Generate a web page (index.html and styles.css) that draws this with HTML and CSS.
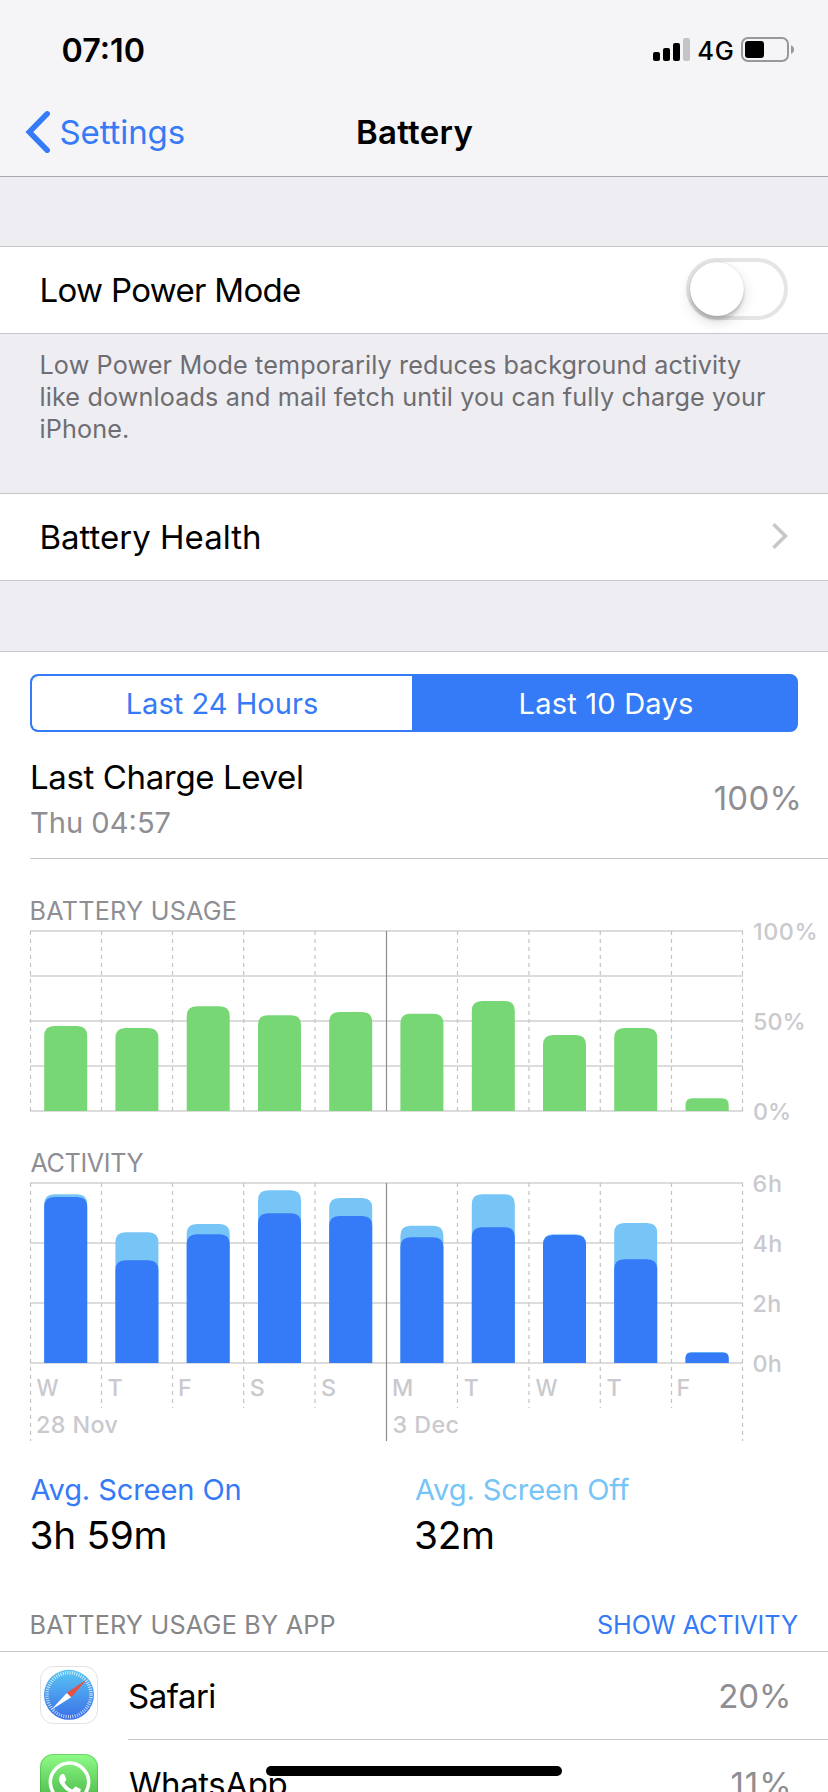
FILE: index.html
```
<!DOCTYPE html>
<html lang="en">
<head>
<meta charset="utf-8">
<title>Battery</title>
<link rel="stylesheet" href="styles.css">
</head>
<body>
<div class="screen">
  <header class="top">
    <div class="status">
      <span class="clock">07:10</span>
      <div class="indicators">
        <svg class="signal" width="37" height="23" viewBox="0 0 37 23">
          <rect x="0" y="14" width="7" height="9" rx="2"/>
          <rect x="10" y="10" width="7" height="13" rx="2"/>
          <rect x="20" y="5" width="7" height="18" rx="2"/>
          <rect x="30" y="0" width="7" height="23" rx="2" fill="#c4c4c6"/>
        </svg>
        <span class="network">4G</span>
        <svg class="cell" width="53" height="25" viewBox="0 0 53 25">
          <rect x="1" y="1" width="46" height="23" rx="6" fill="none" stroke="#98989a" stroke-width="2"/>
          <rect x="4" y="4" width="19" height="17" rx="3"/>
          <path d="M50 8.2c1.8.6 3 2.2 3 4.3s-1.200 3.700-3 4.300z" fill="#98989a"/>
        </svg>
      </div>
    </div>
    <nav class="nav">
      <a class="back">
        <svg width="26" height="44" viewBox="0 0 26 44"><path d="M22.200 3.800 4.300 22l17.900 18.200" fill="none" stroke="#357af6" stroke-width="5.500" stroke-linecap="round"/></svg>
        <span>Settings</span>
      </a>
      <h1 class="title">Battery</h1>
    </nav>
  </header>

  <section class="row">
    <span class="label power">Low Power Mode</span>
    <span class="toggle"><span class="knob"></span></span>
  </section>
  <p class="note"><span>Low Power Mode temporarily reduces background activity</span><br>like downloads and mail fetch until you can fully charge your<br>iPhone.</p>
  <section class="row">
    <span class="label">Battery Health</span>
    <svg class="chevron" width="18" height="28" viewBox="0 0 18 28"><path d="M2.500 2.200 14.400 14 2.500 25.800" fill="none" stroke="#c7c7cc" stroke-width="3.600"/></svg>
  </section>

  <main class="panel">
    <div class="segments">
      <span class="segment hours">Last 24 Hours</span>
      <span class="segment days selected">Last 10 Days</span>
    </div>
    <div class="charge">
      <div>
        <div class="charge-title">Last Charge Level</div>
        <div class="charge-time">Thu 04:57</div>
      </div>
      <span class="charge-value">100%</span>
    </div>

    <h2 class="heading usage">BATTERY USAGE</h2>
    <svg class="chart" width="828" height="222" viewBox="0 926 828 222">
      <path class="grid" d="M30 931H743M30 976H743M30 1021H743M30 1066H743M30 1111H743"/>
      <path class="dash" d="M30.500 931V1111M101.500 931V1111M172.500 931V1111M243.700 931V1111M315 931V1111M457.500 931V1111M529 931V1111M600.300 931V1111M671.500 931V1111M742.500 931V1111"/>
      <path class="week" d="M386.500 931V1111"/>
      <g class="green">
        <path d="M44.200 1111v-75q0-10 10-10h23q10 0 10 10v75z"/>
        <path d="M115.400 1111v-73q0-10 10-10h23q10 0 10 10v73z"/>
        <path d="M186.700 1111v-94.700q0-10 10-10h23q10 0 10 10v94.700z"/>
        <path d="M258 1111v-85.700q0-10 10-10h23q10 0 10 10v85.700z"/>
        <path d="M329.200 1111v-89q0-10 10-10h23q10 0 10 10v89z"/>
        <path d="M400.400 1111v-87.300q0-10 10-10h23q10 0 10 10v87.300z"/>
        <path d="M471.800 1111v-100q0-10 10-10h23q10 0 10 10v100z"/>
        <path d="M543 1111v-66q0-10 10-10h23q10 0 10 10v66z"/>
        <path d="M614.200 1111v-73q0-10 10-10h23q10 0 10 10v73z"/>
        <path d="M685.500 1111v-6q0-6.800 6.800-6.800h29.600q6.800 0 6.800 6.800v6z"/>
      </g>
      <g class="axis">
        <text x="753" y="940" letter-spacing=".55">100%</text>
        <text x="753" y="1030">50%</text>
        <text x="753" y="1120">0%</text>
      </g>
    </svg>

    <h2 class="heading activity">ACTIVITY</h2>
    <svg class="chart" width="828" height="272" viewBox="0 1178 828 272">
      <path class="grid" d="M30 1183H743M30 1243H743M30 1303H743M30 1363H743"/>
      <path class="dash" d="M30.500 1183V1441M101.500 1183V1408M172.500 1183V1408M243.700 1183V1408M315 1183V1408M457.500 1183V1408M529 1183V1408M600.300 1183V1408M671.500 1183V1408M742.500 1183V1441"/>
      <path class="week" d="M386.500 1183V1441"/>
      <g class="light">
        <path d="M44.200 1363v-158.700q0-10 10-10h23q10 0 10 10v158.700z"/>
        <path d="M115.400 1363v-120.700q0-10 10-10h23q10 0 10 10v120.700z"/>
        <path d="M186.700 1363v-129q0-10 10-10h23q10 0 10 10v129z"/>
        <path d="M258 1363v-162.800q0-10 10-10h23q10 0 10 10v162.800z"/>
        <path d="M329.200 1363v-155q0-10 10-10h23q10 0 10 10v155z"/>
        <path d="M400.400 1363v-127.300q0-10 10-10h23q10 0 10 10v127.300z"/>
        <path d="M471.800 1363v-158.700q0-10 10-10h23q10 0 10 10v158.700z"/>
        <path d="M543 1363v-118.700q0-10 10-10h23q10 0 10 10v118.700z"/>
        <path d="M614.200 1363v-130q0-10 10-10h23q10 0 10 10v130z"/>
        <path d="M685.500 1363v-5q0-6 6-6h31.200q6 0 6 6v5z"/>
      </g>
      <g class="blue">
        <path d="M44.200 1363v-156q0-10 10-10h23q10 0 10 10v156z"/>
        <path d="M115.400 1363v-92.700q0-10 10-10h23q10 0 10 10v92.700z"/>
        <path d="M186.700 1363v-118.700q0-10 10-10h23q10 0 10 10v118.700z"/>
        <path d="M258 1363v-139.700q0-10 10-10h23q10 0 10 10v139.700z"/>
        <path d="M329.200 1363v-137q0-10 10-10h23q10 0 10 10v137z"/>
        <path d="M400.400 1363v-115.700q0-10 10-10h23q10 0 10 10v115.700z"/>
        <path d="M471.800 1363v-125.700q0-10 10-10h23q10 0 10 10v125.700z"/>
        <path d="M543 1363v-118q0-10 10-10h23q10 0 10 10v118z"/>
        <path d="M614.200 1363v-93.700q0-10 10-10h23q10 0 10 10v93.700z"/>
        <path d="M685.500 1363v-5q0-5.200 5.800-5.200h31.600q5.800 0 5.800 5.200v5z"/>
      </g>
      <g class="axis">
        <text x="752.500" y="1192" letter-spacing=".8">6h</text>
        <text x="752.500" y="1252" letter-spacing=".5">4h</text>
        <text x="752.500" y="1312" letter-spacing=".5">2h</text>
        <text x="752.500" y="1372" letter-spacing=".3">0h</text>
        <text x="36.500" y="1396" textLength="22" lengthAdjust="spacingAndGlyphs">W</text>
        <text x="107.500" y="1396">T</text>
        <text x="178" y="1396">F</text>
        <text x="249.800" y="1396">S</text>
        <text x="321" y="1396">S</text>
        <text x="392" y="1396">M</text>
        <text x="463.800" y="1396">T</text>
        <text x="535.500" y="1396" textLength="22" lengthAdjust="spacingAndGlyphs">W</text>
        <text x="606.500" y="1396">T</text>
        <text x="676.500" y="1396">F</text>
        <text x="36" y="1433" letter-spacing=".4">28 Nov</text>
        <text x="392.500" y="1433" letter-spacing=".45">3 Dec</text>
      </g>
    </svg>

    <div class="averages">
      <div><div class="avg-label on">Avg. Screen On</div><div class="avg-value">3h 59m</div></div>
      <div><div class="avg-label off">Avg. Screen Off</div><div class="avg-value">32m</div></div>
    </div>

    <div class="apps-head">
      <span class="apps-title">BATTERY USAGE BY APP</span>
      <a class="apps-link">SHOW ACTIVITY</a>
    </div>
    <div class="app">
      <svg class="icon" width="58" height="58" viewBox="0 0 58 58">
        <defs><linearGradient id="sky" x1="0" y1="0" x2="0" y2="1"><stop offset="0" stop-color="#5ac6f3"/><stop offset="1" stop-color="#3a6ee8"/></linearGradient></defs>
        <rect x=".5" y=".5" width="57" height="57" rx="13" fill="#fff" stroke="#e2e2e4"/>
        <circle cx="29" cy="28.800" r="25" fill="url(#sky)"/>
        <circle cx="29" cy="28.800" r="22" fill="none" stroke="#fff" stroke-opacity=".75" stroke-width="3.400" stroke-dasharray=".9 1.404"/>
        <path d="M47 13.300 26.800 26.900 31.200 31.300z" fill="#e94e3e"/>
        <path d="M11 44 26.800 26.900 31.200 31.300z" fill="#fff"/>
      </svg>
      <div class="app-body"><span class="label safari">Safari</span><span class="percent">20%</span></div>
    </div>
    <div class="app">
      <svg class="icon" width="58" height="58" viewBox="0 0 58 58">
        <defs><linearGradient id="leaf" x1="0" y1="0" x2="0" y2="1"><stop offset="0" stop-color="#8ffb88"/><stop offset="1" stop-color="#38a938"/></linearGradient></defs>
        <rect width="58" height="58" rx="13" fill="url(#leaf)"/>
        <rect x=".5" y=".5" width="57" height="57" rx="12.500" fill="none" stroke="#3f9a3f" stroke-opacity=".4"/>
        <circle cx="29.500" cy="28.300" r="19.200" fill="none" stroke="#fff" stroke-width="3.500"/>
        <path transform="translate(8.200 8.500) scale(1.800)" fill="#fff" d="M17.472 14.382c-.297-.149-1.758-.867-2.030-.967-.273-.099-.471-.148-.670.150-.197.297-.767.966-.940 1.164-.173.199-.347.223-.644.075-.297-.150-1.255-.463-2.390-1.475-.883-.788-1.480-1.761-1.653-2.059-.173-.297-.018-.458.130-.606.134-.133.298-.347.446-.520.149-.174.198-.298.298-.497.099-.198.050-.371-.025-.520-.075-.149-.669-1.612-.916-2.207-.242-.579-.487-.500-.669-.510-.173-.008-.371-.010-.570-.010-.198 0-.520.074-.792.372-.272.297-1.040 1.016-1.040 2.479 0 1.462 1.065 2.875 1.213 3.074.149.198 2.096 3.200 5.077 4.487.709.306 1.262.489 1.694.625.712.227 1.360.195 1.871.118.571-.085 1.758-.719 2.006-1.413.248-.694.248-1.289.173-1.413-.074-.124-.272-.198-.570-.347z"/>
      </svg>
      <div class="app-body"><span class="label whatsapp">WhatsApp</span><span class="percent eleven">11%</span></div>
    </div>
  </main>
  <div class="home"></div>
</div>
</body>
</html>
```
FILE: styles.css
```
* { box-sizing: border-box; }

body {
  margin: 0;
  font-family: "Inter", "Liberation Sans", sans-serif;
  font-size: 33px;
  color: #000;
}

.screen {
  position: relative;
  width: 828px;
  height: 1792px;
  overflow: hidden;
  background: #eeedf2;
}

svg { display: block; flex: none; overflow: visible; }

/* Status bar and navigation */
.top {
  height: 177px;
  margin-bottom: 69px;
  background: #f5f5f7;
  border-bottom: 1px solid #a8a8ac;
}

.status {
  display: flex;
  justify-content: space-between;
  align-items: center;
  height: 88px;
  padding: 11px 34px 0 61.5px;
}

.clock { margin-top: 2px; font-size: 32.3px; font-weight: 600; line-height: 40px; }
.indicators { display: flex; align-items: center; }
.network {
  margin: 3px 6.500px 0 7px;
  font-size: 25.500px;
  font-weight: 500;
  line-height: 30px;
  letter-spacing: .75px;
}

.nav {
  display: grid;
  grid-template-columns: 1fr auto 1fr;
  align-items: center;
  height: 88px;
  padding: 0 24px 0 25px;
}

.back { display: flex; align-items: center; gap: 8.500px; color: #357af6; letter-spacing: -.1px; }
.title { margin: 0; font-size: 33px; font-weight: 600; letter-spacing: .29px; }

/* Setting rows */
.row {
  display: flex;
  justify-content: space-between;
  align-items: center;
  height: 88px;
  padding: 0 40px 0 39.500px;
  background: #fff;
  border-top: 1px solid #c8c7cc;
  border-bottom: 1px solid #c8c7cc;
}

.label { line-height: 44px; }
.power { letter-spacing: -.68px; }
.chevron { margin: -2px -1px 0 0; }

.toggle {
  width: 102px;
  height: 62px;
  margin-top: -2px;
  border: 4px solid #e5e5e5;
  border-radius: 31px;
}

.knob {
  display: block;
  width: 54px;
  height: 54px;
  border-radius: 50%;
  background: #fff;
  box-shadow: 0 6px 14px rgba(0, 0, 0, .14), 0 4px 3px rgba(0, 0, 0, .15), 0 0 1px rgba(0, 0, 0, .25);
}

.note {
  height: 159px;
  margin: 0;
  padding: 15px 40px 0 39.500px;
  font-size: 25.200px;
  line-height: 32px;
  letter-spacing: .13px;
  color: #6d6d72;
  white-space: nowrap;
}

/* Usage panel */
.panel {
  height: 1200px;
  margin-top: 70px;
  padding-top: 22px;
  background: #fff;
  border-top: 1px solid #c8c7cc;
}

.segments {
  display: grid;
  grid-template-columns: 380px 1fr;
  height: 58px;
  margin: 0 30px;
  border: 2px solid #357af6;
  border-radius: 8px;
  background: #357af6;
  overflow: hidden;
}

.segment {
  font-size: 29.100px;
  line-height: 55px;
  height: 54px;
  text-align: center;
  background: #fff;
  color: #357af6;
  border-radius: 6px 0 0 6px;
}

.selected { padding-left: 4px; background: #357af6; color: #fff; border-radius: 0; letter-spacing: .18px; }

.charge {
  display: flex;
  justify-content: space-between;
  height: 127px;
  margin-left: 30px;
  padding: 23px 26px 0 0;
  border-bottom: 1px solid #c8c7cc;
}

.charge-title { line-height: 44px; letter-spacing: -.37px; }
.charge-time { font-size: 29.100px; line-height: 47px; color: #8e8e93; }
.charge-value { line-height: 86px; letter-spacing: .2px; color: #8e8e93; }

.heading {
  margin: 0 30px;
  font-size: 25.200px;
  font-weight: 400;
  line-height: 30px;
  color: #8e8e93;
}

.usage { margin: 37px 0 0 29.500px; letter-spacing: .25px; }
.activity { margin-left: 30.500px; letter-spacing: -.4px; }

/* Charts */
.grid { stroke: #dcdcdc; stroke-width: 2; }
.dash { stroke: #c4c4c4; stroke-width: 1.200; stroke-dasharray: 4 4; }
.week { stroke: #8c8c8c; stroke-width: 1.200; }
.green { fill: #77d775; }
.light { fill: #77c4f6; }
.blue { fill: #357af6; }
.axis text { font-size: 23.300px; font-weight: 500; fill: #c9c9ce; }

.averages {
  display: grid;
  grid-template-columns: 384.500px 1fr;
  margin: 20px 0 0 30.500px;
}

.avg-label { font-size: 29.100px; line-height: 39px; }
.on { color: #357af6; letter-spacing: -.12px; }
.off { color: #77c4f6; letter-spacing: -.1px; }
.avg-value { font-size: 38.800px; line-height: 51px; letter-spacing: -.29px; margin-left: -1px; }

.apps-head {
  display: flex;
  justify-content: space-between;
  height: 92px;
  padding: 39px 30px 0 29.500px;
  border-bottom: 1px solid #c8c7cc;
  font-size: 25.200px;
  line-height: 52px;
}

.apps-title { letter-spacing: .23px; color: #868689; }
.apps-link { letter-spacing: -.07px; color: #357af6; }

.app { display: flex; align-items: center; height: 88px; padding-left: 40px; }
.icon { margin-top: -2px; }
.app-body {
  display: flex;
  flex: 1;
  justify-content: space-between;
  align-items: center;
  height: 88px;
  margin-left: 30px;
  padding-right: 36.500px;
  border-bottom: 1px solid #c8c7cc;
}

.safari { letter-spacing: -.5px; }
.whatsapp { margin-left: 1px; letter-spacing: -.42px; }
.percent { color: #8e8e93; }
.eleven { letter-spacing: .9px; margin-right: -1px; }

.home {
  position: absolute;
  bottom: 16px;
  left: 266px;
  width: 296px;
  height: 10px;
  border-radius: 5px;
  background: #000;
}
```
